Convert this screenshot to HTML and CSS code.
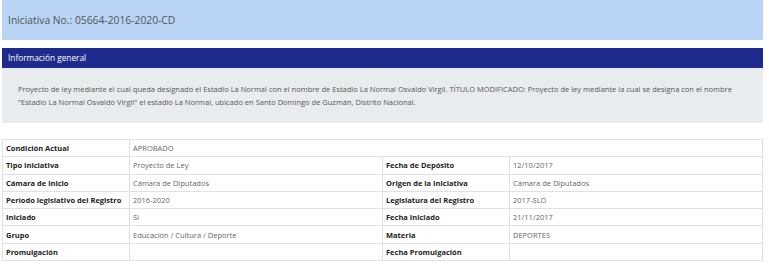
FILE: index.html
```html
<!DOCTYPE html>
<html lang="es">

<head>
    <meta charset="utf-8">
    <title>Iniciativa 05664-2016-2020-CD</title>
    <link rel="stylesheet" href="styles.css">
</head>

<body>
    <div id="main">
        <div class="header">Iniciativa No.: 05664-2016-2020-CD</div>

        <div class="panel">
            <div class="panel-title">Información general</div>
            <div class="panel-body">
                Proyecto de ley mediante el cual queda designado el Estadio La Normal con el nombre de Estadio La Normal Osvaldo Virgil. TÍTULO MODIFICADO: Proyecto de ley mediante la cual se designa con el nombre "Estadio La Normal Osvaldo Virgil" el estadio La Normal, ubicado en Santo Domingo de Guzmán, Distrito Nacional.
            </div>
        </div>

        <table class="details">
            <colgroup>
                <col class="c-label">
                <col class="c-value">
                <col class="c-label2">
                <col>
            </colgroup>
            <tr>
                <th>Condición Actual</th>
                <td colspan="3">APROBADO</td>
            </tr>
            <tr>
                <th>Tipo Iniciativa</th>
                <td>Proyecto de Ley</td>
                <th>Fecha de Depósito</th>
                <td>12/10/2017</td>
            </tr>
            <tr>
                <th>Cámara de inicio</th>
                <td>Cámara de Diputados</td>
                <th>Origen de la Iniciativa</th>
                <td>Cámara de Diputados</td>
            </tr>
            <tr>
                <th>Período legislativo del Registro</th>
                <td>2016-2020</td>
                <th>Legislatura del Registro</th>
                <td>2017-SLO</td>
            </tr>
            <tr>
                <th>Iniciado</th>
                <td>SI</td>
                <th>Fecha Iniciado</th>
                <td>21/11/2017</td>
            </tr>
            <tr>
                <th>Grupo</th>
                <td>Educación / Cultura / Deporte</td>
                <th>Materia</th>
                <td>DEPORTES</td>
            </tr>
            <tr>
                <th>Promulgación</th>
                <td></td>
                <th>Fecha Promulgación</th>
                <td></td>
            </tr>
        </table>
    </div>
</body>

</html>
```

FILE: styles.css
```css
html,
body {
    margin: 0;
    padding: 0;
    background: #ffffff;
    font-family: 'Open Sans', 'Noto Sans', sans-serif;
    color: #444;
}

#main {
    width: 761px;
    padding: 0 6px 0 2px;
}

.header {
    background-color: #b9d4f5;
    color: #555;
    font-size: 10.3px;
    height: 40px;
    line-height: 40px;
    padding-left: 6px;
    margin-bottom: 8px;
}

.panel {
    margin-bottom: 16px;
}

.panel-title {
    background-color: #1e2b8c;
    color: #ffffff;
    font-size: 8.3px;
    height: 20px;
    line-height: 20px;
    padding-left: 6px;
}

.panel-body {
    background-color: #e9ecef;
    color: #555;
    font-size: 7.5px;
    line-height: 13px;
    padding: 15px 16px 14px 16px;
}

.details {
    width: 761px;
    border-collapse: collapse;
    table-layout: fixed;
    font-size: 7.5px;
}

.c-label {
    width: 127px;
}

.c-value {
    width: 253px;
}

.c-label2 {
    width: 127px;
}

.details th,
.details td {
    border: 1px solid #dee2e6;
    height: 16.3px;
    padding: 0 3px;
    text-align: left;
    white-space: nowrap;
}

.details th {
    color: #222;
    font-weight: bold;
}

.details td {
    color: #666;
}
```
